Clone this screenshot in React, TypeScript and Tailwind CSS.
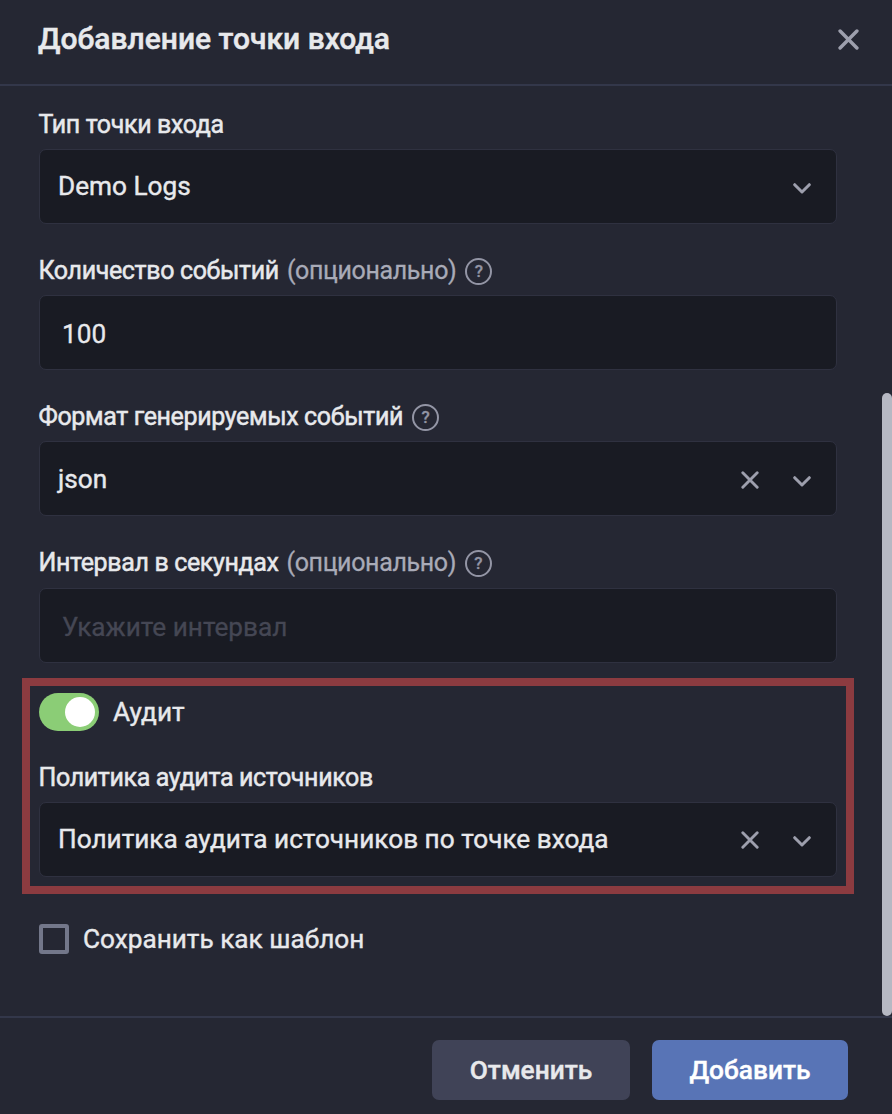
import type { ReactNode } from 'react';

function CrossIcon({ size, stroke }: { size: number; stroke: number }) {
    return (
        <svg width={size} height={size} viewBox="0 0 20 20" fill="none" stroke="currentColor" strokeWidth={stroke} strokeLinecap="round">
            <path d="M2 2 18 18M18 2 2 18" />
        </svg>
    );
}

function ChevronIcon() {
    return (
        <svg width="18" height="11" viewBox="0 0 18 11" fill="none" stroke="currentColor" strokeWidth="3" strokeLinecap="round" strokeLinejoin="round">
            <path d="M1.7 1.7 9 9 16.3 1.7" />
        </svg>
    );
}

function HelpIcon() {
    return (
        <span className="ml-[9px] flex h-[27px] w-[27px] items-center justify-center rounded-full border-2 border-[#9395a5] text-[17px] leading-none font-medium tracking-normal text-[#9395a5] [-webkit-text-stroke:0.3px]">
            ?
        </span>
    );
}

function Label({ text, optional, help }: { text: string; optional?: boolean; help?: boolean }) {
    return (
        <div className="-ml-[0.5px] flex h-[32px] items-center text-[25px] leading-[32px] tracking-[-0.36px] whitespace-nowrap">
            <span className="[-webkit-text-stroke:0.5px]">{text}</span>
            {optional && <span className="ml-[8px] text-[#a9abb8] [-webkit-text-stroke:0.3px]">(опционально)</span>}
            {help && <HelpIcon />}
        </div>
    );
}

function SelectBox({ value, clearable, className = '' }: { value: string; clearable?: boolean; className?: string }) {
    return (
        <div className={`flex h-[75px] items-center rounded-[7px] border border-[#2f3140] bg-[#191b23] pr-[25px] pl-[18px] text-[#9d9fad] ${className}`}>
            <span className="flex-1 text-[26.2px] text-[#e8e9ec] [-webkit-text-stroke:0.4px]">{value}</span>
            {clearable && (
                <button className="mr-[34px]" aria-label="Очистить">
                    <CrossIcon size={18} stroke={3.2} />
                </button>
            )}
            <span className="mt-[3px]">
                <ChevronIcon />
            </span>
        </div>
    );
}

function TextBox({ value, placeholder }: { value?: string; placeholder?: string }) {
    return (
        <input
            className="block h-[75px] w-full rounded-[7px] border border-[#2f3140] bg-[#191b23] px-[22px] pt-[2px] text-[26.2px] text-[#e8e9ec] [-webkit-text-stroke:0.3px] placeholder:text-[#454754]"
            defaultValue={value}
            placeholder={placeholder}
        />
    );
}

function Field({ children }: { children: ReactNode }) {
    return <div className="flex flex-col gap-[8px]">{children}</div>;
}

export default function App() {
    return (
        <div className="flex h-[1114px] w-[892px] flex-col overflow-hidden bg-[#252733] font-['Roboto',sans-serif] text-[#e8e9ec]">
            <header className="flex h-[86px] shrink-0 items-center justify-between border-b-2 border-[#33374a] pr-[33px] pb-[5px] pl-[38px]">
                <h1 className="pb-[2px] text-[30px] leading-[40px] font-medium [-webkit-text-stroke:0.5px]">Добавление точки входа</h1>
                <button className="text-[#9d9fad]" aria-label="Закрыть">
                    <CrossIcon size={21} stroke={3.3} />
                </button>
            </header>

            <div className="flex flex-1">
                <main className="w-[882px] pt-[23px] pr-[45px] pl-[39px]">
                    <div className="flex flex-col gap-[31px]">
                        <Field>
                            <Label text="Тип точки входа" />
                            <SelectBox value="Demo Logs" />
                        </Field>
                        <Field>
                            <Label text="Количество событий" optional help />
                            <TextBox value="100" />
                        </Field>
                        <Field>
                            <Label text="Формат генерируемых событий" help />
                            <SelectBox value="json" clearable className="pt-[2px]" />
                        </Field>
                        <div className="flex flex-col gap-[9px]">
                            <Label text="Интервал в секундах" optional help />
                            <TextBox placeholder="Укажите интервал" />
                        </div>
                    </div>

                    <section className="mt-[15px] -mr-[17px] -ml-[17px] h-[216px] border-8 border-[#8c3b40] px-[9px] pt-[7px]">
                        <div className="mb-[31px] flex items-center">
                            <button role="switch" aria-checked="true" aria-label="Аудит" className="flex h-[38px] w-[60px] items-center justify-end rounded-full bg-[#8bcd76] pr-[4px]">
                                <span className="h-[30px] w-[30px] rounded-full bg-white" />
                            </button>
                            <span className="ml-[14px] text-[26.2px] leading-[38px] [-webkit-text-stroke:0.4px]">Аудит</span>
                        </div>
                        <Field>
                            <Label text="Политика аудита источников" />
                            <SelectBox value="Политика аудита источников по точке входа" clearable />
                        </Field>
                    </section>

                    <label className="mt-[30px] flex h-[30px] items-center">
                        <span className="h-[30px] w-[30px] rounded-[3px] border-4 border-[#73778a]" />
                        <span className="ml-[14px] pt-[2px] text-[26.2px] [-webkit-text-stroke:0.4px]">Сохранить как шаблон</span>
                    </label>
                </main>
                <div className="w-[10px] pt-[307px]">
                    <div className="h-[623px] rounded-full bg-[#b6b8c3]" />
                </div>
            </div>

            <footer className="flex h-[98px] shrink-0 justify-end gap-[22px] border-t-2 border-[#33374a] pt-[22px] pr-[44px]">
                <button className="h-[60px] w-[198px] rounded-[7px] bg-[#404357] pt-[2px] text-[26.3px] font-medium [-webkit-text-stroke:0.4px]">Отменить</button>
                <button className="h-[60px] w-[196px] rounded-[7px] bg-[#5874b6] pt-[2px] text-[26.3px] font-medium text-white [-webkit-text-stroke:0.4px]">Добавить</button>
            </footer>
        </div>
    );
}
